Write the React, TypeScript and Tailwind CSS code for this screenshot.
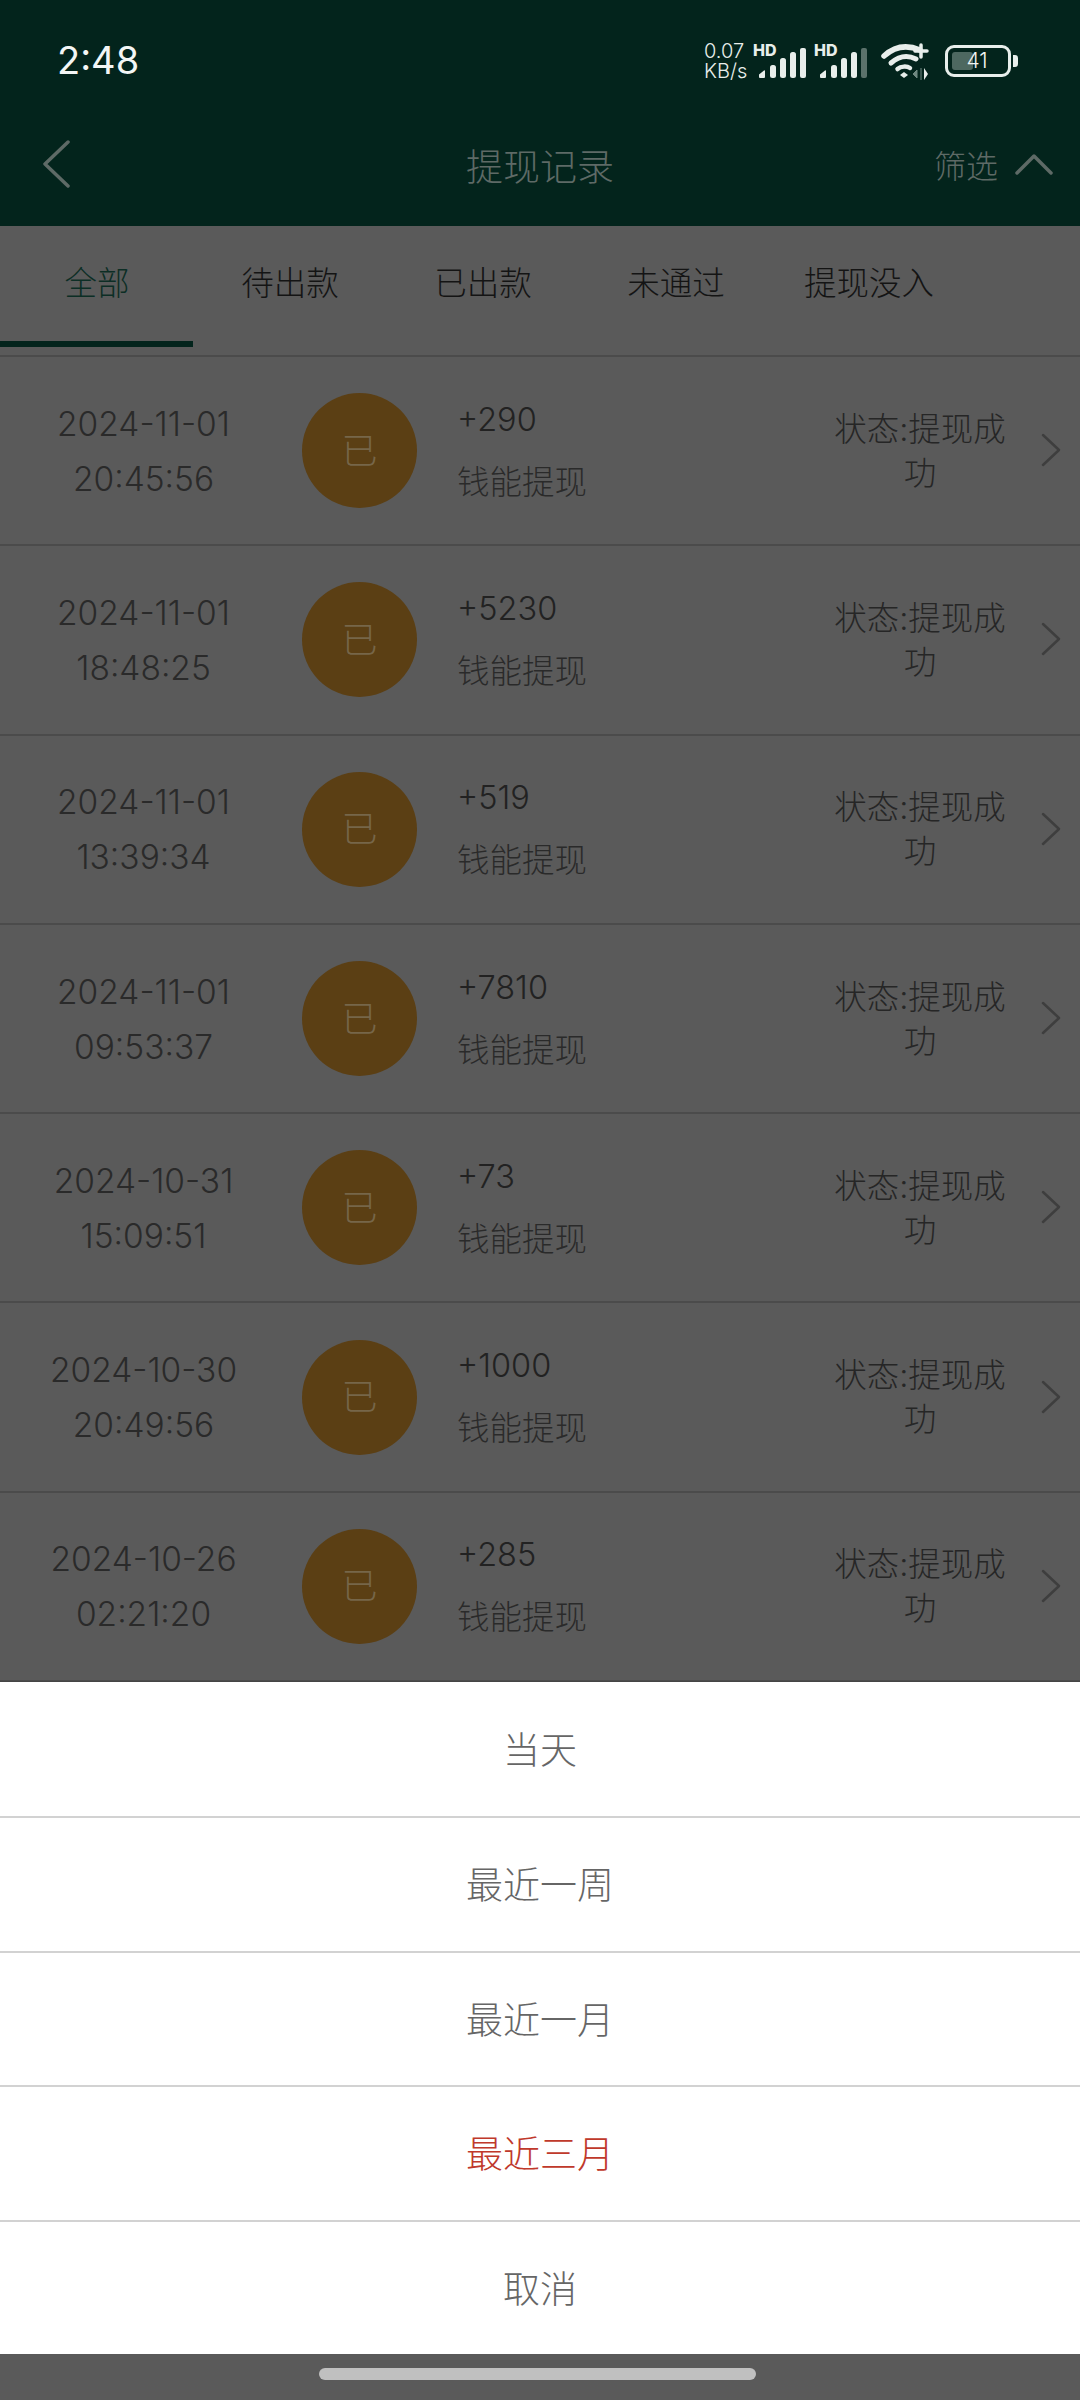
const rows = [
  ["2024-11-01", "20:45:56", "+290"],
  ["2024-11-01", "18:48:25", "+5230"],
  ["2024-11-01", "13:39:34", "+519"],
  ["2024-11-01", "09:53:37", "+7810"],
  ["2024-10-31", "15:09:51", "+73"],
  ["2024-10-30", "20:49:56", "+1000"],
  ["2024-10-26", "02:21:20", "+285"],
];

const tabs = ["全部", "待出款", "已出款", "未通过", "提现没入"];

function Signal({ last }: { last: string }) {
  return (
    <div className="relative w-[50px] h-[36px]">
      <span className="absolute left-[-5px] top-[0px] text-[16px] leading-[14px] font-extrabold text-[#e8eeeb]">HD</span>
      <svg className="absolute left-0 top-0" width="50" height="36" viewBox="0 0 50 36" fill="#e8eeeb">
        <path d="M1 31.5 L6 27.5 Q7 27 7 28 V34 Q7 35 6 35 H2 Q1 35 1 34 Z" />
        <rect x="12" y="22" width="6" height="13" rx="2.5" />
        <rect x="22" y="15" width="6" height="20" rx="2.5" />
        <rect x="32" y="9" width="6" height="26" rx="2.5" />
        <rect x="42" y="5" width="6" height="30" rx="2" fill={last} />
      </svg>
    </div>
  );
}

function StatusIcons() {
  return (
    <div className="flex items-center">
      <div className="flex flex-col items-start text-[20px] leading-[20px] font-light text-[#e8eeeb] w-[54px] -mt-[1px] -ml-[4px]">
        <span>0.07</span>
        <span>KB/s</span>
      </div>
      <Signal last="#e8eeeb" />
      <div className="w-[11px]" />
      <Signal last="#5b726b" />
      <svg className="ml-[12px]" width="52" height="38" viewBox="0 0 52 38" fill="none">
        <path d="M3 14 C14 4 27 3 39 8" stroke="#e8eeeb" strokeWidth="5.5" strokeLinecap="round" />
        <path d="M10 21 C18 14 27 13 35 17" stroke="#e8eeeb" strokeWidth="5" strokeLinecap="round" />
        <path d="M16.5 27 C20 24 26 24 29 26" stroke="#e8eeeb" strokeWidth="4.5" strokeLinecap="round" />
        <path d="M19 33 L23 30 L27 33 L23 36 Z" fill="#e8eeeb" />
        <path d="M40 3 V15 M34 9 H46" stroke="#e8eeeb" strokeWidth="3.5" strokeLinecap="round" />
        <path d="M36 28 L32 32 L36 36 Z M40 26 V38" fill="#6f8780" stroke="#6f8780" strokeWidth="1" />
        <path d="M43 26 V38 L47 32 Z" fill="#e8eeeb" />
      </svg>
      <div className="relative ml-[12px] w-[66px] h-[32px] rounded-[9px] border-[3px] border-[#e8eeeb] flex items-center justify-center">
        <div className="absolute left-[4px] top-[4px] bottom-[4px] w-[21px] rounded-[3px] bg-[#4d6860]" />
        <span className="relative text-[21px] leading-[22px] font-light text-[#f2f5f4] ml-[-2px]">41</span>
      </div>
      <div className="ml-[2px] w-[5px] h-[12px] rounded-r-[3px] bg-[#e8eeeb]" />
    </div>
  );
}

export default function App() {
  return (
    <div
      className="w-[1080px] h-[2400px] flex flex-col overflow-hidden bg-[#5a5a5a]"
      style={{ fontFamily: 'Inter, "Noto Sans CJK SC", sans-serif' }}
    >
      <header className="h-[226px] shrink-0 bg-[#03241c] flex flex-col">
        <div className="h-[118px] pl-[57px] pr-[62px] pt-[4px] flex items-center justify-between">
          <span className="text-[38px] leading-none font-normal text-[#f3f6f5] -mt-[2px]">2:48</span>
          <StatusIcons />
        </div>
        <div className="relative h-[108px] -mt-[2px] flex items-center justify-center">
          <svg className="absolute left-[42px] top-[24px]" width="30" height="48" viewBox="0 0 30 48" fill="none">
            <path d="M26 2 L3 24 L26 46" stroke="#5e6a66" strokeWidth="3.5" strokeLinecap="round" strokeLinejoin="round" />
          </svg>
          <span className="text-[37px] leading-none font-light text-[#5e6a66] -mt-[6px]">提现记录</span>
          <div className="absolute left-[934px] top-[31px] flex items-center">
            <span className="text-[32px] leading-[40px] font-light text-[#5e6a66]">筛选</span>
            <svg className="ml-[17px] -mt-[6px]" width="38" height="24" viewBox="0 0 38 24" fill="none">
              <path d="M2 21 L19 4 L36 21" stroke="#5e6a66" strokeWidth="3.5" strokeLinecap="round" strokeLinejoin="round" />
            </svg>
          </div>
        </div>
      </header>

      <nav className="h-[131px] shrink-0 flex border-b-[2px] border-[#4b4b4b] pb-[8px]">
        {tabs.map((t, i) => (
          <div
            key={t}
            className={
              i === 0
                ? "w-[193px] h-full flex items-center justify-center border-b-[6px] border-[#03241c] text-[32.5px] font-light text-[#0c2e25]"
                : "w-[193px] h-full flex items-center justify-center border-b-[6px] border-transparent text-[32.5px] font-light text-[#141414]"
            }
          >
            <span className="mt-[2px] ml-[1px]">{t}</span>
          </div>
        ))}
      </nav>

      <main className="flex-1 min-h-0 overflow-hidden flex flex-col">
        {rows.map(([d, t, a]) => (
          <div key={d + t} className="h-[189.3px] shrink-0 border-b-[2px] border-[#4b4b4b] flex items-center pt-[1px]">
            <div className="w-[287px] shrink-0 flex flex-col items-center text-[33.5px] leading-[55px] font-light text-[#2a2a2a] mt-[1px]">
              <span>{d}</span>
              <span>{t}</span>
            </div>
            <div className="ml-[15px] w-[115px] h-[115px] shrink-0 rounded-full bg-[#5b3f14] flex items-center justify-center text-[36px] font-light text-[#766649] -mt-[1px]">
              已
            </div>
            <div className="ml-[40px] w-[302px] shrink-0 flex flex-col">
              <span className="text-[32.5px] leading-[50px] font-light text-[#222222]">{a}</span>
              <span className="text-[32.5px] leading-[50px] mt-[13px] font-light text-[#2a2a2a]">钱能提现</span>
            </div>
            <div className="ml-[75px] w-[172px] shrink-0 text-center text-[32.5px] leading-[44px] font-light text-[#262626] mt-[1px]">
              状态:提现成功
            </div>
            <svg className="ml-[34px] -mt-[2px]" width="22" height="34" viewBox="0 0 22 34" fill="none">
              <path d="M3 2 L19 17 L3 32" stroke="#3e3e3e" strokeWidth="2.5" strokeLinecap="round" strokeLinejoin="round" />
            </svg>
          </div>
        ))}
      </main>

      <section className="shrink-0 bg-white flex flex-col border-t border-[#444444]">
        {["当天", "最近一周", "最近一月", "最近三月", "取消"].map((s, i) => (
          <div
            key={s}
            className={
              (i > 0 ? "border-t-[2px] border-[#d2d2d2] " : "") +
              (i === 3 ? "text-[#c0392b] " : "text-[#666666] ") +
              "h-[134.4px] flex items-center justify-center text-[37px] font-light pt-[3px]"
            }
          >
            {s}
          </div>
        ))}
      </section>

      <div className="h-[46px] shrink-0 flex items-center justify-center pb-[6px] pr-[5px]">
        <div className="w-[437px] h-[12px] rounded-full bg-[#c0c0c0]" />
      </div>
    </div>
  );
}
